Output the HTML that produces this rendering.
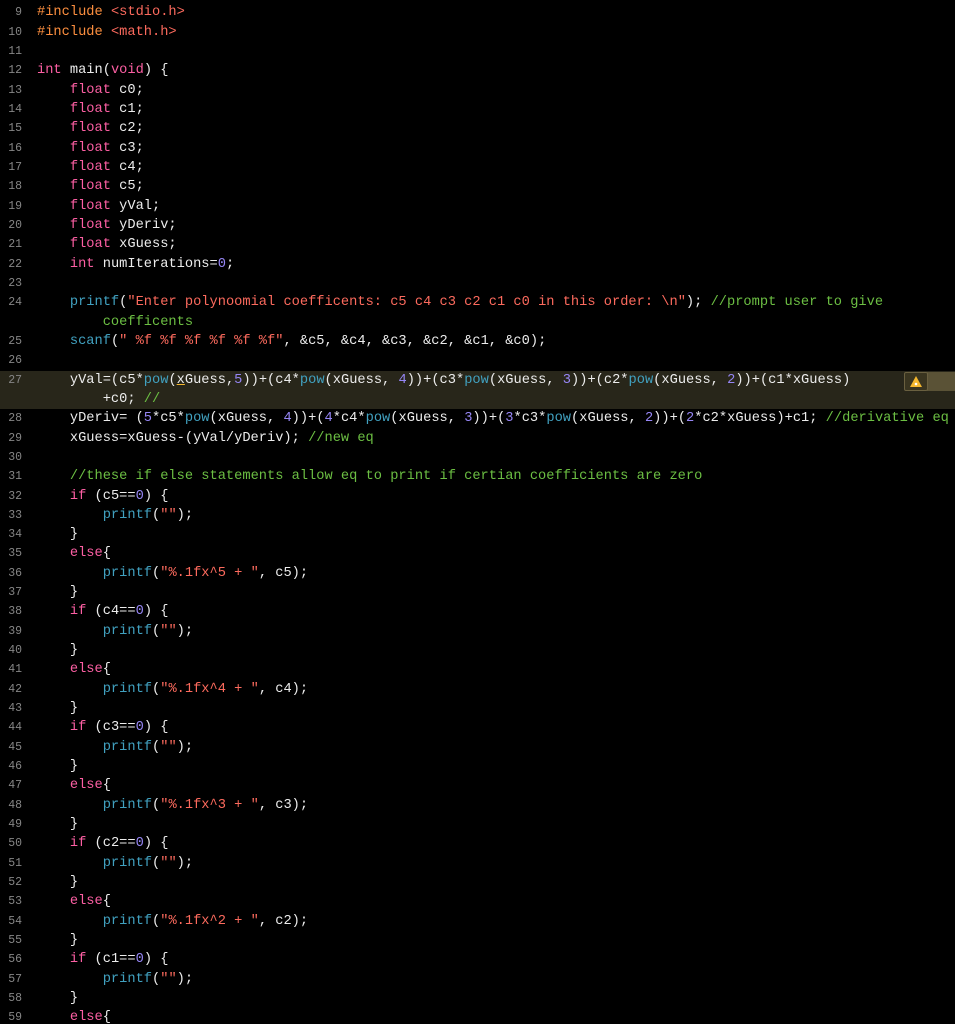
<!DOCTYPE html>
<html><head><meta charset="utf-8"><style>
html,body{margin:0;padding:0;background:#000;width:955px;height:1024px;overflow:hidden}
#w{position:relative;padding-top:3.3px;font-family:"Liberation Mono",monospace;font-size:13.7px;color:#ececec}
.r{height:19.33px;line-height:19.33px;white-space:pre;position:relative}
.ln{position:absolute;left:0;width:22px;text-align:right;color:#868686;font-size:11.5px}
.t{position:absolute;left:37px}
.k{color:#fc5fa3}.p{color:#fd8f3f}.s{color:#fc6a5d}.n{color:#9686f5}.f{color:#41a1c0}.c{color:#6cbf43}
.hl{position:absolute;left:0;top:370.6px;width:955px;height:38.7px;background:#28261a}
.warn{position:absolute;left:904px;top:372px;width:22px;height:17px;border:1px solid #6a6040;border-radius:2px;background:#3a3520}
.band{position:absolute;left:927px;top:372px;width:28px;height:19px;background:#5a5236}
</style></head><body><div id="w">
<div class="hl"></div><div class="band"></div>
<div class="warn"><svg width="22" height="17" viewBox="0 0 22 17"><path d="M11 3 L17 14 L5 14 Z" fill="#f5b82e"/><circle cx="11" cy="11" r="1.3" fill="#fff"/></svg></div>
<div class="r"><span class="ln">9</span><span class="t"><span class="p">#include</span> <span class="s">&lt;stdio.h&gt;</span></span></div>
<div class="r"><span class="ln">10</span><span class="t"><span class="p">#include</span> <span class="s">&lt;math.h&gt;</span></span></div>
<div class="r"><span class="ln">11</span></div>
<div class="r"><span class="ln">12</span><span class="t"><span class="k">int</span> main(<span class="k">void</span>) {</span></div>
<div class="r"><span class="ln">13</span><span class="t">    <span class="k">float</span> c0;</span></div>
<div class="r"><span class="ln">14</span><span class="t">    <span class="k">float</span> c1;</span></div>
<div class="r"><span class="ln">15</span><span class="t">    <span class="k">float</span> c2;</span></div>
<div class="r"><span class="ln">16</span><span class="t">    <span class="k">float</span> c3;</span></div>
<div class="r"><span class="ln">17</span><span class="t">    <span class="k">float</span> c4;</span></div>
<div class="r"><span class="ln">18</span><span class="t">    <span class="k">float</span> c5;</span></div>
<div class="r"><span class="ln">19</span><span class="t">    <span class="k">float</span> yVal;</span></div>
<div class="r"><span class="ln">20</span><span class="t">    <span class="k">float</span> yDeriv;</span></div>
<div class="r"><span class="ln">21</span><span class="t">    <span class="k">float</span> xGuess;</span></div>
<div class="r"><span class="ln">22</span><span class="t">    <span class="k">int</span> numIterations=<span class="n">0</span>;</span></div>
<div class="r"><span class="ln">23</span></div>
<div class="r"><span class="ln">24</span><span class="t">    <span class="f">printf</span>(<span class="s">"Enter polynoomial coefficents: c5 c4 c3 c2 c1 c0 in this order: \n"</span>); <span class="c">//prompt user to give</span></span></div>
<div class="r"><span class="t">        <span class="c">coefficents</span></span></div>
<div class="r"><span class="ln">25</span><span class="t">    <span class="f">scanf</span>(<span class="s">" %f %f %f %f %f %f"</span>, &amp;c5, &amp;c4, &amp;c3, &amp;c2, &amp;c1, &amp;c0);</span></div>
<div class="r"><span class="ln">26</span></div>
<div class="r"><span class="ln">27</span><span class="t">    yVal=(c5*<span class="f">pow</span>(<span style="text-decoration:underline;text-decoration-color:#f5b82e">x</span>Guess,<span class="n">5</span>))+(c4*<span class="f">pow</span>(xGuess, <span class="n">4</span>))+(c3*<span class="f">pow</span>(xGuess, <span class="n">3</span>))+(c2*<span class="f">pow</span>(xGuess, <span class="n">2</span>))+(c1*xGuess)</span></div>
<div class="r"><span class="t">        +c0; <span class="c">//</span></span></div>
<div class="r"><span class="ln">28</span><span class="t">    yDeriv= (<span class="n">5</span>*c5*<span class="f">pow</span>(xGuess, <span class="n">4</span>))+(<span class="n">4</span>*c4*<span class="f">pow</span>(xGuess, <span class="n">3</span>))+(<span class="n">3</span>*c3*<span class="f">pow</span>(xGuess, <span class="n">2</span>))+(<span class="n">2</span>*c2*xGuess)+c1; <span class="c">//derivative eq</span></span></div>
<div class="r"><span class="ln">29</span><span class="t">    xGuess=xGuess-(yVal/yDeriv); <span class="c">//new eq</span></span></div>
<div class="r"><span class="ln">30</span></div>
<div class="r"><span class="ln">31</span><span class="t">    <span class="c">//these if else statements allow eq to print if certian coefficients are zero</span></span></div>
<div class="r"><span class="ln">32</span><span class="t">    <span class="k">if</span> (c5==<span class="n">0</span>) {</span></div>
<div class="r"><span class="ln">33</span><span class="t">        <span class="f">printf</span>(<span class="s">""</span>);</span></div>
<div class="r"><span class="ln">34</span><span class="t">    }</span></div>
<div class="r"><span class="ln">35</span><span class="t">    <span class="k">else</span>{</span></div>
<div class="r"><span class="ln">36</span><span class="t">        <span class="f">printf</span>(<span class="s">"%.1fx^5 + "</span>, c5);</span></div>
<div class="r"><span class="ln">37</span><span class="t">    }</span></div>
<div class="r"><span class="ln">38</span><span class="t">    <span class="k">if</span> (c4==<span class="n">0</span>) {</span></div>
<div class="r"><span class="ln">39</span><span class="t">        <span class="f">printf</span>(<span class="s">""</span>);</span></div>
<div class="r"><span class="ln">40</span><span class="t">    }</span></div>
<div class="r"><span class="ln">41</span><span class="t">    <span class="k">else</span>{</span></div>
<div class="r"><span class="ln">42</span><span class="t">        <span class="f">printf</span>(<span class="s">"%.1fx^4 + "</span>, c4);</span></div>
<div class="r"><span class="ln">43</span><span class="t">    }</span></div>
<div class="r"><span class="ln">44</span><span class="t">    <span class="k">if</span> (c3==<span class="n">0</span>) {</span></div>
<div class="r"><span class="ln">45</span><span class="t">        <span class="f">printf</span>(<span class="s">""</span>);</span></div>
<div class="r"><span class="ln">46</span><span class="t">    }</span></div>
<div class="r"><span class="ln">47</span><span class="t">    <span class="k">else</span>{</span></div>
<div class="r"><span class="ln">48</span><span class="t">        <span class="f">printf</span>(<span class="s">"%.1fx^3 + "</span>, c3);</span></div>
<div class="r"><span class="ln">49</span><span class="t">    }</span></div>
<div class="r"><span class="ln">50</span><span class="t">    <span class="k">if</span> (c2==<span class="n">0</span>) {</span></div>
<div class="r"><span class="ln">51</span><span class="t">        <span class="f">printf</span>(<span class="s">""</span>);</span></div>
<div class="r"><span class="ln">52</span><span class="t">    }</span></div>
<div class="r"><span class="ln">53</span><span class="t">    <span class="k">else</span>{</span></div>
<div class="r"><span class="ln">54</span><span class="t">        <span class="f">printf</span>(<span class="s">"%.1fx^2 + "</span>, c2);</span></div>
<div class="r"><span class="ln">55</span><span class="t">    }</span></div>
<div class="r"><span class="ln">56</span><span class="t">    <span class="k">if</span> (c1==<span class="n">0</span>) {</span></div>
<div class="r"><span class="ln">57</span><span class="t">        <span class="f">printf</span>(<span class="s">""</span>);</span></div>
<div class="r"><span class="ln">58</span><span class="t">    }</span></div>
<div class="r"><span class="ln">59</span><span class="t">    <span class="k">else</span>{</span></div>
</div></body></html>
